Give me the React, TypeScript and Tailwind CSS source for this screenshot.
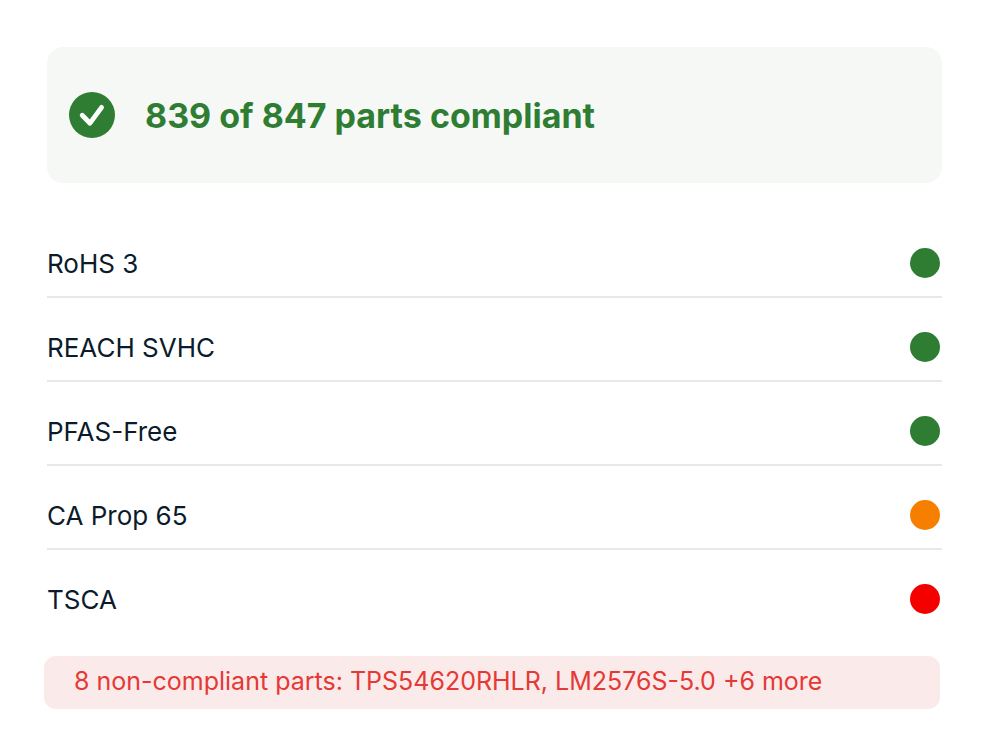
import React from 'react';

const checks = [
  { name: 'RoHS 3', color: 'bg-[#2e7d32]' },
  { name: 'REACH SVHC', color: 'bg-[#2e7d32]' },
  { name: 'PFAS-Free', color: 'bg-[#2e7d32]' },
  { name: 'CA Prop 65', color: 'bg-[#f77f00]' },
  { name: 'TSCA', color: 'bg-[#f50000]' }
];

export default function App() {
  return (
    <main className="min-h-screen bg-white pt-[47px] pr-[46px] pb-9 pl-[47px] font-['Inter',sans-serif] text-[#0b1b2b]">
      <div className="flex items-center gap-[30px] rounded-2xl bg-[#f6f8f6] px-[22px] py-[45px]">
        <svg viewBox="0 0 46 46" className="h-[46px] w-[46px] shrink-0" aria-hidden="true">
          <circle cx="23" cy="23" r="23" fill="#2e7d32" />
          <path d="M13.2 23.2L21 31.2L32.6 15.4" fill="none" stroke="#fff" strokeWidth="4.8" strokeLinecap="round" strokeLinejoin="round" />
        </svg>
        <h1 className="pt-[2px] text-[34px] leading-[44px] font-bold text-[#2e7d32]">839 of 847 parts compliant</h1>
      </div>

      <ul className="mt-[31px] divide-y-2 divide-[#e8e7ec]">
        {checks.map((check) => (
          <li key={check.name} className="flex items-start justify-between pt-[34px] pr-[2px] pb-[17px]">
            <span className="pt-px text-[26px] leading-[30px]">{check.name}</span>
            <span className={`h-[30px] w-[30px] rounded-full ${check.color}`} />
          </li>
        ))}
      </ul>

      <p className="mt-6 mr-[2px] -ml-[3px] rounded-xl bg-[#fbeaea] px-[30px] pt-[7px] pb-[10px] text-[25px] leading-9 text-[#e53935]">
        8 non-compliant parts: TPS54620RHLR, LM2576S-5.0 +6 more
      </p>
    </main>
  );
}
